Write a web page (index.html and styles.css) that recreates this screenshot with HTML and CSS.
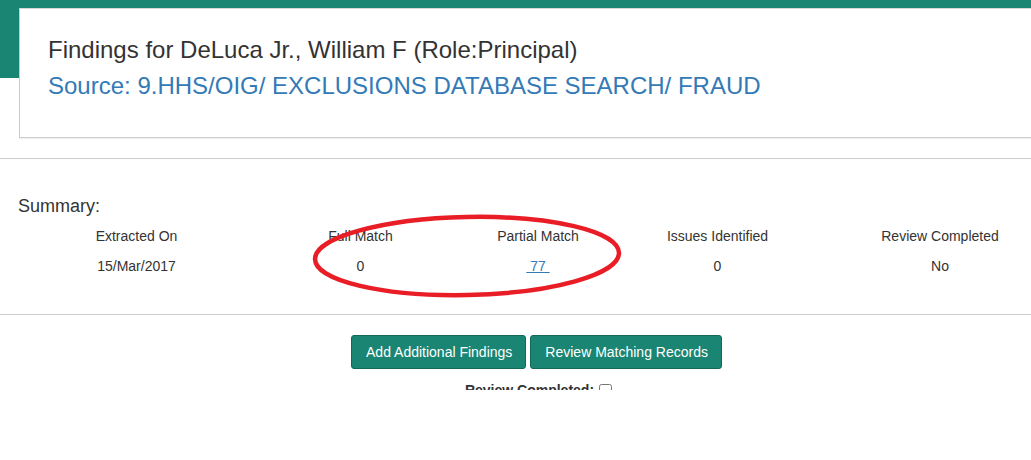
FILE: index.html
```html
<!DOCTYPE html>
<html>
<head>
<meta charset="utf-8">
<link rel="stylesheet" href="styles.css">
</head>
<body>
<div class="page">
  <header class="hero">
    <div class="card">
      <h3 class="title">Findings for DeLuca Jr., William F (Role:Principal)</h3>
      <h3 class="source">Source: 9.HHS/OIG/ EXCLUSIONS DATABASE SEARCH/ FRAUD</h3>
    </div>
  </header>
  <hr class="rule rule-top">
  <section class="content">
    <div class="summary-label">Summary:</div>
    <div class="summary-grid">
      <div class="cell">Extracted On</div>
      <div class="cell">Full Match</div>
      <div class="cell">Partial Match</div>
      <div class="cell">Issues Identified</div>
      <div class="cell">Review Completed</div>
      <div class="cell">15/Mar/2017</div>
      <div class="cell">0</div>
      <div class="cell"><a class="link" href="#">&nbsp;77&nbsp;</a></div>
      <div class="cell">0</div>
      <div class="cell">No</div>
    </div>
  </section>
  <hr class="rule rule-mid">
  <section class="content actions">
    <div class="buttons">
      <button class="btn">Add Additional Findings</button>
      <button class="btn">Review Matching Records</button>
    </div>
    <div class="review"><span class="review-label">Review Completed:</span> <input type="checkbox" class="check"></div>
  </section>
  <svg class="annotation" width="1031" height="390" viewBox="0 0 1031 390">
    <ellipse cx="467" cy="256" rx="152" ry="39" fill="none" stroke="#e81d25" stroke-width="4.5" transform="rotate(-1.2 467 256)"/>
  </svg>
</div>
</body>
</html>
```
FILE: styles.css
```css
html, body {
  margin: 0;
  padding: 0;
  overflow: hidden;
  background: #fff;
}
body {
  font-family: "Liberation Sans", Arial, sans-serif;
  font-size: 14px;
  line-height: 20px;
  color: #333;
}
.page {
  position: relative;
  height: 390px;
  overflow: hidden;
  width: 1031px;
}
.hero {
  padding-top: 8px;
  background:
    linear-gradient(#198572, #198572) 0 0 / 100% 8px no-repeat,
    linear-gradient(#198572, #198572) 0 0 / 19px 78px no-repeat;
}
.card {
  margin-left: 19px;
  width: 1100px;
  background: #fff;
  border: 1px solid #ccc;
  border-top-color: #d6d6d6;
  box-shadow: 0 1px 1px rgba(0,0,0,0.05);
  padding: 23px 0 33px 28px;
}
.title, .source {
  margin: 0;
  font-size: 24px;
  line-height: 36px;
  font-weight: normal;
}
.title { color: #333; }
.source { color: #337ab7; }
.rule {
  margin: 0;
  border: 0;
  border-top: 1px solid #ccc;
  height: 0;
  width: 1100px;
}
.rule-top { margin-top: 20px; }
.rule-mid { margin-top: 33px; }
.content {
  margin-left: 18px;
  width: 1037px;
}
.summary-label {
  margin-top: 37px;
  font-size: 18px;
  line-height: 20px;
}
.summary-grid {
  margin-top: 5px;
  display: grid;
  grid-template-columns: 237px 211px 144px 215px 230px;
}
.cell {
  text-align: center;
  padding: 5px 0;
}
.link {
  color: #337ab7;
  text-decoration: underline;
}
.actions {
  text-align: center;
  padding-top: 20px;
}
.buttons {
  display: flex;
  justify-content: center;
  gap: 4px;
}
.btn {
  font-family: "Liberation Sans", Arial, sans-serif;
  font-size: 14px;
  line-height: 20px;
  color: #fff;
  background: #198572;
  border: 1px solid #12695a;
  border-radius: 3px;
  padding: 6px 13px 6px 14px;
  margin: 0;
}
.review {
  margin-top: 11px;
  display: flex;
  justify-content: center;
  align-items: flex-start;
  gap: 5px;
  padding-left: 4px;
}
.review-label { font-weight: bold; }
.check {
  margin: 4px 0 0 0;
  width: 13px;
  height: 13px;
}
.annotation {
  position: absolute;
  left: 0;
  top: 0;
  pointer-events: none;
}
```
